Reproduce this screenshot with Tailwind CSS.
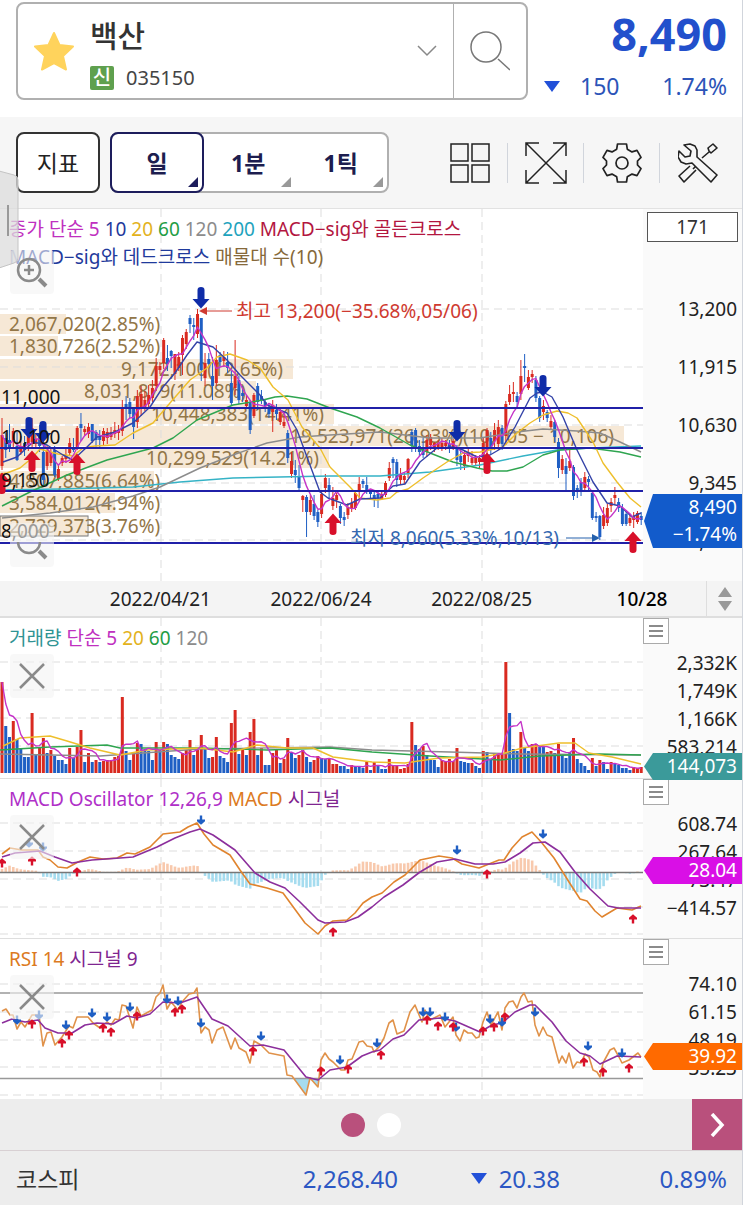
<!DOCTYPE html>
<html lang="ko">
<head>
  <meta charset="UTF-8" />
  <meta name="viewport" content="width=device-width, initial-scale=1.0" />
  <title>백산 035150</title>
  <script src="https://cdn.jsdelivr.net/npm/@tailwindcss/browser@4"></script>
</head>
<body class="relative border-r border-gray-300 bg-white font-['Noto_Sans','Noto_Sans_CJK_KR',sans-serif] text-[19px] leading-7 text-[#222]">

  <!-- shared chart symbols -->
  <svg class="absolute h-0 w-0" aria-hidden="true">
    <defs>
      <symbol id="arrow" viewBox="-9 -11 18 22" overflow="visible">
        <path d="M-3.5 -8a3.5 3 0 0 1 7 0V1H8.500L0 10.500L-8.500 1H-3.500Z" />
      </symbol>
      <symbol id="mini" viewBox="-5 -5 10 10" overflow="visible">
        <path d="M-1.200 -4.500H1.200V-.5H4V1.200L0 4.800L-4 1.200V-.5H-1.200Z" />
      </symbol>
    </defs>
  </svg>

  <header class="flex h-[117px] items-start pt-[2px] pl-4 pr-[15px]">
    <div class="flex h-[98px] w-[512px] items-stretch rounded-lg border-2 border-[#b0b0b0]">
      <button type="button" aria-label="관심종목" class="flex w-[72px] items-center justify-center">
        <svg class="h-10 w-10" viewBox="0 0 40 40"><path fill="#ffd35c" stroke="#ffd35c" stroke-width="2" stroke-linejoin="round" d="M20 2l5.500 12 13.500 1.500-10 9.500 3 13.500L20 32 8 38.500l3-13.500L1 15.500 14.500 14z" /></svg>
      </button>
      <button type="button" class="flex flex-1 items-center text-left">
        <span class="flex flex-1 flex-col pt-3">
          <span class="text-[30px] leading-[42px] font-medium text-[#333]">백산</span>
          <span class="flex items-center gap-3">
            <span class="flex h-6 w-6 items-center justify-center rounded-xs bg-[#5fa04e] text-[20px] font-medium text-white">신</span>
            <span class="text-[20px] leading-[42px] text-[#444]">035150</span>
          </span>
        </span>
        <svg class="mr-4 h-3 w-5" viewBox="0 0 20 12" fill="none" stroke="#888" stroke-width="1.500"><path d="M1 1l9 9 9-9" /></svg>
      </button>
      <button type="button" aria-label="검색" class="flex w-[73px] items-center justify-center border-l border-[#b0b0b0]">
        <svg class="h-10 w-10" viewBox="0 0 40 40" fill="none" stroke="#777" stroke-width="1.500"><circle cx="16" cy="16" r="15" /><path d="M28 28l12 11" /></svg>
      </button>
    </div>
    <div class="ml-4 flex-1 text-right text-[#2c54b8]">
      <div class="text-[45px] leading-[64px] font-bold text-[#2250cc]">8,490</div>
      <div class="flex items-center text-[23px] leading-10">
        <svg class="h-[11px] w-4" viewBox="0 0 16 11"><path fill="#2250d8" d="M0 0h16L8 11z" /></svg>
        <span class="ml-5">150</span>
        <span class="ml-auto">1.74%</span>
      </div>
    </div>
  </header>

  <nav class="flex h-[92px] items-center border-b border-[#e2e2e2] bg-[#f6f6f6] pr-[6px] pl-4">
    <button type="button" class="h-[61px] w-[84px] rounded-lg border-2 border-[#333] bg-white text-[23px]">지표</button>
    <div class="ml-[10px] flex h-[61px] w-[279px] items-stretch rounded-lg border-2 border-[#b0b0b0] bg-white text-[23px] font-bold text-[#1d1d4f]">
      <button type="button" aria-pressed="true" class="relative -m-[2px] w-[94px] rounded-lg border-2 border-[#1d1d5c]">일
        <svg class="absolute right-1 bottom-1 h-[10px] w-[10px]" viewBox="0 0 10 10"><path fill="#1d1d5c" d="M10 0v10H0z" /></svg>
      </button>
      <button type="button" aria-pressed="false" class="relative flex-1">1분
        <svg class="absolute right-1 bottom-1 h-[10px] w-[10px]" viewBox="0 0 10 10"><path fill="#999" d="M10 0v10H0z" /></svg>
      </button>
      <button type="button" aria-pressed="false" class="relative flex-1">1틱
        <svg class="absolute right-1 bottom-1 h-[10px] w-[10px]" viewBox="0 0 10 10"><path fill="#999" d="M10 0v10H0z" /></svg>
      </button>
    </div>
    <div class="ml-auto flex h-10 items-center divide-x divide-gray-300 text-[#222]">
      <button type="button" aria-label="화면분할" class="flex h-10 w-[75px] items-center justify-center">
        <svg class="h-10 w-10" viewBox="0 0 40 40" fill="none" stroke="currentColor" stroke-width="1.500"><path d="M1 1h17v17H1zM22 1h17v17H22zM1 22h17v17H1zM22 22h17v17H22z" /></svg>
      </button>
      <button type="button" aria-label="전체화면" class="flex h-10 w-[76px] items-center justify-center">
        <svg class="h-[42px] w-[42px]" viewBox="0 0 42 42" fill="none" stroke="currentColor" stroke-width="1.500"><path d="M1 14V1h13M28 1h13v13M41 28v13H28M14 41H1V28M1 1l40 40M41 1L1 41" /></svg>
      </button>
      <button type="button" aria-label="설정" class="flex h-10 w-[76px] items-center justify-center">
        <svg class="h-10 w-10" viewBox="0 0 40 40" fill="none" stroke="currentColor" stroke-width="1.700" stroke-linejoin="round"><path d="M15.500 1h9l.8 5.200 4.700 2.700 5-1.500 4 7-3.500 3.600v4l3.500 3.600-4 7-5-1.500-4.700 2.700-.8 5.200h-9l-.8-5.200-4.700-2.700-5 1.500-4-7 3.500-3.600v-4L1 14.400l4-7 5 1.500 4.700-2.700z" /><circle cx="20" cy="20" r="6" /></svg>
      </button>
      <button type="button" aria-label="도구" class="flex h-10 w-[76px] items-center justify-center">
        <svg class="h-10 w-10" viewBox="0 0 40 40" fill="none" stroke="currentColor" stroke-width="1.600" stroke-linejoin="round"><path d="M6 2l6-1 5 2 2 4v7l20 18-6 7-19-19-6 1-5-2-3-5 1-6 6 6 5-1 1-5zM31 8l2 2 6-5-4-4-5 4zM31 9l-7 6M12 23L1 33l5 6 12-12M15 26l2-2" /></svg>
      </button>
    </div>
  </nav>

  <!-- side drawer handle -->
  <svg class="absolute top-[170px] left-0 z-10 h-[100px] w-[19px]" viewBox="0 0 19 100"><path fill="#dcdcdc" fill-opacity=".75" stroke="#c4c4c4" d="M-1 1l15 4q4 1 4 5v78q0 4-4 5l-15 5z" /><path stroke="#999" stroke-width="2" d="M8 35v31" /></svg>

  <main>
    <!-- price -->
    <section class="flex">
      <div class="relative flex-1">
        <svg id="price" class="block h-auto w-full" viewBox="0 209 643 372"></svg>
        <p class="absolute top-[6px] left-[9px] text-[19px] leading-7 text-[#1f3a9c]">
          <span class="text-[#c030c0]">종가 단순 5</span> <span>10</span>
          <span class="text-[#e3b21c]">20</span> <span class="text-[#1f9d45]">60</span>
          <span class="text-[#8c8c8c]">120</span> <span class="text-[#1fa3bd]">200</span>
          <span class="text-[#b3163f]">MACD−sig와 골든크로스</span><br />
          <span>MACD−sig와 데드크로스</span> <span class="text-[#86693a]">매물대 수(10)</span>
        </p>
        <button type="button" aria-label="확대" class="absolute top-[41px] left-[10px] h-11 w-11 rounded bg-[#f4f4f4]/60">
          <svg class="h-11 w-11" viewBox="0 0 44 44" fill="none" stroke="#8a8a8a" stroke-width="2.500"><circle cx="19" cy="20" r="11" /><path d="M19 15v10M14 20h10" /><path stroke-width="4" d="M29 29l7 7" /></svg>
        </button>
        <button type="button" aria-label="축소" class="absolute top-[314px] left-[10px] h-11 w-11 rounded bg-[#f4f4f4]/60">
          <svg class="h-11 w-11" viewBox="0 0 44 44" fill="none" stroke="#8a8a8a" stroke-width="2.500"><path d="M8 19a11 11 0 1 0 22 0" /><path stroke-width="4" d="M29 28l7 7" /></svg>
        </button>
      </div>
      <div class="relative w-[99px] bg-[#fafafa] pt-[3px] text-right">
        <input type="text" value="171" aria-label="봉 개수" class="mx-1 block h-[30px] w-[91px] border border-[#555] bg-white text-center text-[#333]" />
        <div class="mt-[38px] pr-[5px] leading-[58px]">
          <div>13,200</div><div>11,915</div><div>10,630</div><div>9,345</div><div>8,060</div>
        </div>
        <div class="absolute top-[285px] right-0 left-px h-[54px] bg-[#125bcb] pr-[5px] leading-[27px] text-white [clip-path:polygon(9px_0,100%_0,100%_100%,9px_100%,0_50%)]">8,490<br />−1.74%</div>
      </div>
    </section>

    <div class="flex h-[37px] items-center border-b-2 border-[#dedede] bg-[#f4f4f4] pl-20 text-center">
      <span class="flex-1">2022/04/21</span>
      <span class="flex-1">2022/06/24</span>
      <span class="flex-1">2022/08/25</span>
      <span class="w-36 pl-4 font-medium text-black">10/28</span>
      <button type="button" aria-label="차트 높이" class="flex h-full w-9 items-center justify-center border-l border-[#dedede]">
        <svg class="h-6 w-4" viewBox="0 0 16 24" fill="#999"><path d="M8 0l7 10H1zM8 24l7-10H1z" /></svg>
      </button>
    </div>

    <!-- volume -->
    <section class="flex border-b border-[#dedede]">
      <div class="relative flex-1">
        <svg id="volume" class="block h-auto w-full" viewBox="0 618 643 160"></svg>
        <p class="absolute top-[6px] left-[9px] text-[#c030c0]">
          <span class="text-[#2f9393]">거래량</span> <span>단순 5</span> <span class="text-[#e3b21c]">20</span>
          <span class="text-[#1f9d45]">60</span> <span class="text-[#8c8c8c]">120</span>
        </p>
        <button type="button" aria-label="거래량 닫기" class="absolute top-9 left-[10px] h-11 w-11 rounded bg-[#f4f4f4]/60">
          <svg class="h-11 w-11" viewBox="0 0 44 44" stroke="#8a8a8a" stroke-width="2.500"><path d="M10 10l24 24M34 10L10 34" /></svg>
        </button>
      </div>
      <div class="relative w-[99px] bg-[#fafafa] text-right">
        <button type="button" aria-label="거래량 메뉴" class="absolute top-0 left-0 flex h-[26px] w-[26px] items-center justify-center border border-[#aaa] bg-white">
          <svg class="h-[14px] w-[14px]" viewBox="0 0 14 14" stroke="#666" stroke-width="1.500"><path d="M0 2h14M0 7h14M0 12h14" /></svg>
        </button>
        <div class="mt-[31px] pr-[5px]">
          <div>2,332K</div><div>1,749K</div><div>1,166K</div><div>583,214</div>
        </div>
        <div class="absolute top-[135px] right-0 left-px z-10 h-[27px] bg-[#3b9a9a] pr-[5px] leading-[27px] text-white [clip-path:polygon(9px_0,100%_0,100%_100%,9px_100%,0_50%)]">144,073</div>
      </div>
    </section>

    <!-- MACD oscillator -->
    <section class="flex border-b border-[#dedede]">
      <div class="relative flex-1">
        <svg id="macd" class="block h-auto w-full" viewBox="0 779 643 159"></svg>
        <p class="absolute top-[6px] left-[9px] text-[#b030c8]">MACD Oscillator 12,26,9 <span class="text-[#dc7a22]">MACD</span> <span class="text-[#7f2590]">시그널</span></p>
        <button type="button" aria-label="MACD 닫기" class="absolute top-9 left-[10px] h-11 w-11 rounded bg-[#f4f4f4]/60">
          <svg class="h-11 w-11" viewBox="0 0 44 44" stroke="#8a8a8a" stroke-width="2.500"><path d="M10 10l24 24M34 10L10 34" /></svg>
        </button>
      </div>
      <div class="relative w-[99px] bg-[#fafafa] text-right">
        <button type="button" aria-label="MACD 메뉴" class="absolute top-0 left-0 flex h-[26px] w-[26px] items-center justify-center border border-[#aaa] bg-white">
          <svg class="h-[14px] w-[14px]" viewBox="0 0 14 14" stroke="#666" stroke-width="1.500"><path d="M0 2h14M0 7h14M0 12h14" /></svg>
        </button>
        <div class="mt-[31px] pr-[5px]">
          <div>608.74</div><div>267.64</div><div>−73.47</div><div>−414.57</div>
        </div>
        <div class="absolute top-[78px] right-0 left-px h-[27px] bg-[#d90fe6] pr-[5px] leading-[27px] text-white [clip-path:polygon(9px_0,100%_0,100%_100%,9px_100%,0_50%)]">28.04</div>
      </div>
    </section>

    <!-- RSI -->
    <section class="flex">
      <div class="relative flex-1">
        <svg id="rsi" class="block h-auto w-full" viewBox="0 939 643 160"></svg>
        <p class="absolute top-[6px] left-[9px] text-[#dc7a22]">RSI 14 <span class="text-[#7f2590]">시그널 9</span></p>
        <button type="button" aria-label="RSI 닫기" class="absolute top-9 left-[10px] h-11 w-11 rounded bg-[#f4f4f4]/60">
          <svg class="h-11 w-11" viewBox="0 0 44 44" stroke="#8a8a8a" stroke-width="2.500"><path d="M10 10l24 24M34 10L10 34" /></svg>
        </button>
      </div>
      <div class="relative w-[99px] bg-[#fafafa] text-right">
        <button type="button" aria-label="RSI 메뉴" class="absolute top-0 left-0 flex h-[26px] w-[26px] items-center justify-center border border-[#aaa] bg-white">
          <svg class="h-[14px] w-[14px]" viewBox="0 0 14 14" stroke="#666" stroke-width="1.500"><path d="M0 2h14M0 7h14M0 12h14" /></svg>
        </button>
        <div class="mt-[31px] pr-[5px]">
          <div>74.10</div><div>61.15</div><div>48.19</div><div>35.23</div>
        </div>
        <div class="absolute top-[104px] right-0 left-px h-[27px] bg-[#ff6a00] pr-[5px] leading-[27px] text-white [clip-path:polygon(9px_0,100%_0,100%_100%,9px_100%,0_50%)]">39.92</div>
      </div>
    </section>
  </main>

  <div class="grid h-[52px] grid-cols-[50px_1fr_50px] items-center border-b border-[#d8d0d3] bg-[#ededed]">
    <div class="col-start-2 flex justify-center gap-3">
      <button type="button" aria-label="1 페이지" class="h-6 w-6 rounded-full bg-[#b9507c]"></button>
      <button type="button" aria-label="2 페이지" class="h-6 w-6 rounded-full bg-white"></button>
    </div>
    <button type="button" aria-label="다음" class="flex h-full items-center justify-center bg-[#b9507c]">
      <svg class="h-6 w-4" viewBox="0 0 16 24" fill="none" stroke="#fff" stroke-width="3.500"><path d="M3 1l10 11L3 23" /></svg>
    </button>
  </div>

  <footer class="flex h-[55px] items-center bg-[#ededed] pr-[15px] pl-4 text-[24px] text-[#2c58c4]">
    <div class="flex flex-1 justify-between"><span class="text-[23px] text-[#333]">코스피</span><span>2,268.40</span></div>
    <div class="flex w-[162px] items-center justify-end gap-3">
      <svg class="h-[11px] w-4" viewBox="0 0 16 11"><path fill="#2250d8" d="M0 0h16L8 11z" /></svg>
      <span>20.38</span>
    </div>
    <div class="w-[167px] text-right">0.89%</div>
  </footer>

  <script>
    const RED = '#d92a20', BLUE = '#1f5fc4';
    const px = i => 2 + 3.76 * i;

    // one candle: colour high top bottom low
    const candles = `r418,435,466,470 b433,438,450,458 b424,440,447,452 r428,431,442,448 b432,446,460,461 r436,446,452,455 b436,443,450,456 r425,432,444,451 r418,428,442,447 r434,439,444,447
b425,436,446,452 b432,452,480,485 r446,450,466,470 r448,452,463,466 b446,450,475,477 r464,469,479,481 r456,458,463,466 r449,456,459,463 r438,443,453,456 b438,448,450,452
r426,428,447,450 b413,424,428,441 r426,429,432,436 r423,427,434,438 b424,424,441,443 b430,432,440,447 b430,436,440,447 r428,431,441,445 r428,432,438,444 r427,432,437,440
r422,430,434,438 r425,431,433,440 r400,408,431,436 b396,404,407,420 b398,402,414,418 b408,409,427,439 r390,396,422,428 r386,394,408,416 r391,400,407,411 r385,395,404,408
r380,388,398,402 r358,366,386,391 r362,366,370,374 r338,340,363,369 b345,358,364,371 b350,351,356,368 r354,354,374,380 r352,357,368,371 r335,338,355,375 r329,332,344,349
b315,318,324,333 b318,325,327,340 r309,314,334,338 b318,318,370,381 r353,363,378,386 b353,359,364,366 b357,376,386,400 r345,360,383,386 b352,355,362,366 r351,357,361,367
b352,362,368,373 b371,383,403,405 r340,376,388,395 b376,380,400,404 b386,393,396,402 r396,400,406,408 b400,402,430,434 r393,395,416,418 b383,386,402,410 b390,396,400,404
b400,402,406,412 b404,408,414,418 r400,405,412,432 b404,410,414,420 r408,412,422,425 r415,422,426,428 b430,433,458,463 r452,461,474,478 b460,470,475,483 b465,477,488,490
r495,496,500,512 b495,497,512,537 r495,500,512,515 b495,504,516,520 b510,512,522,527 r490,494,514,518 r474,478,488,493 b478,485,491,498 r487,498,506,510 r493,495,500,508
b504,506,518,524 b512,517,520,526 r503,507,515,519 r498,503,508,512 r490,493,508,510 r477,484,491,500 b479,481,484,488 b477,485,490,494 b489,491,494,500 b491,495,500,507
b490,494,498,508 r490,494,499,500 r481,483,495,497 r462,468,478,481 b457,459,463,478 b459,462,480,487 r468,475,480,484 r472,476,480,484 r458,459,473,478 b430,432,446,452
b428,430,448,452 b440,446,452,456 b438,447,455,458 r435,440,452,457 r434,437,445,450 r442,443,448,452 r440,443,447,450 r438,443,449,451 r440,443,446,450 b440,444,449,453
r439,441,447,450 b445,449,460,466 b448,456,462,470 r450,455,466,470 r448,453,456,462 r451,458,463,465 r455,458,463,466 r455,458,462,468 r438,443,458,462 r428,430,450,455
b432,438,448,454 r423,430,441,450 r420,427,444,450 b425,428,444,450 r401,404,436,445 r385,394,402,405 r382,392,394,402 b392,396,402,408 r360,376,394,400 b354,366,368,382
r370,377,388,390 r370,374,377,383 b376,380,398,402 b396,398,418,422 r400,406,412,420 b410,412,418,422 r415,421,427,430 b420,422,437,442 b438,442,468,478 r455,459,470,474
b458,466,474,490 r447,461,468,471 b465,467,496,500 b485,488,490,498 b478,482,492,496 r472,477,488,491 b476,479,482,490 b490,493,518,520 b512,516,518,522 b515,516,537,540
r507,515,526,529 r504,508,523,526 r498,502,506,512 r487,495,498,504 b498,502,508,512 b504,508,524,526 b510,514,524,526 r515,518,523,526 r512,516,520,528 r511,513,522,524 b512,516,520,525`
      .split(/\s+/).map(s => [s[0], ...s.slice(1).split(',').map(Number)]);

    const volumes = `r91 b47 b36 r52 b34 b24 b16 b16 r60 b19 r26 r35 b20 r23 b17 b13 b13 b9 r25 b15 r26 r43 b11 r20 b11 r13 b11 r12 r13 r13 r16 r17 r76 b22 b13 r19 r30 b29 b24 b22
b13 r31 b24 r31 b29 b18 b16 b14 r20 r23 r33 b18 r23 r38 b24 b15 r16 r36 b17 b15 b11 r50 r63 b19 r24 b18 r41 r54 b18 r25 b8 b8 r20 r24 b10 r14 r35 b21 b15 r18
r23 b16 b11 r13 r17 b15 b14 r14 r9 r9 b7 b7 b4 r8 b7 b7 b5 r11 b3 r11 b8 b4 b4 r14 r7 r8 r4 r5 r9 r51 b28 b24 r27 b18 b13 b13 b6 r13 r12 r14
r12 r25 b12 b11 b10 r10 b7 b5 r22 b21 b14 r19 r20 r20 r111 b60 b24 b22 r41 b25 b22 r29 r29 b26 b27 r21 r22 b20 r29 b17 b15 b21 r35 b14 b10 b7 b3 r15 b7 r13
b11 b4 r11 b9 b8 b5 b5 b3 r6 r5 r6`.split(/\s+/).map(s => [s[0], Number(s.slice(1))]);

    const line = (pts, color, w = 1.4) => `<polyline points="${pts}" fill="none" stroke="${color}" stroke-width="${w}" stroke-linejoin="round"/>`;
    const grid = (ys, top, bottom) =>
      ys.map(y => `<path d="M0 ${y}H643" stroke="#ddd" stroke-dasharray="8 5"/>`).join('') +
      [161, 321, 482].map(x => `<path d="M${x} ${top}V${bottom}" stroke="#ddd" stroke-dasharray="8 5"/>`).join('');
    const average = (list, n) => list.map((_, i) => {
      const part = list.slice(Math.max(0, i - n + 1), i + 1);
      return px(i).toFixed(1) + ',' + (part.reduce((a, b) => a + b, 0) / part.length).toFixed(1);
    }).join(' ');
    const marks = (id, w, h, list, up) => list.map(([x, y]) =>
      `<g transform="translate(${x} ${y})${up ? ' rotate(180)' : ''}" fill="${up ? '#d8102a' : id === 'arrow' ? '#0f2ca8' : BLUE}"><use href="#${id}" x="${-w / 2}" y="${-h / 2}" width="${w}" height="${h}"/></g>`).join('');

    // ---- price ----
    const profile = [
      [66, '2,067,020(2.85%)'], [58, '1,830,726(2.52%)'], [293, '9,172,100(12.65%)'], [256, '8,031,879(11.08%)'], [334, '10,448,383(14.41%)'],
      [624, '19,523,971(26.93%)(10,105 − 10,106)'], [329, '10,299,529(14.21%)'], [154, '4,807,885(6.64%)'], [115, '3,584,012(4.94%)'], [87, '2,729,373(3.76%)']
    ];
    const bandY = i => Math.round(314 + 22.4 * i);
    let svg = profile.map(([w], i) => `<rect x="0" y="${bandY(i)}" width="${w}" height="20" fill="#f6e8d6"/>`).join('');
    svg += `<rect x="0" y="516" width="88" height="20" fill="none" stroke="#777"/>`;
    svg += grid([309, 367, 425, 483, 540], 209, 581);
    svg += profile.map(([w, t], i) => w > 200
      ? `<text x="${w - 10}" y="${bandY(i) + 17}" text-anchor="end" class="fill-[#927648] text-[19px]">${t}</text>`
      : `<text x="9" y="${bandY(i) + 17}" class="fill-[#927648] text-[19px]">${t}</text>`).join('');
    svg += candles.map(([c, h, t, b, l], i) => {
      const color = c === 'r' ? RED : BLUE;
      return `<path d="M${px(i)} ${h}V${l}" stroke="${color}" stroke-width="1"/><rect x="${px(i) - 1.5}" y="${t}" width="3" height="${b - t}" fill="${color}"/>`;
    }).join('');
    svg += line('0,490 60,489 133,487 180,482 233,478 330,476 380,476 430,472 480,465 523,456 557,450 590,448 641,446', '#35b3c6');
    svg += line('2,518 50,513 93,507 133,496 160,487 200,468 233,455 267,443 300,437 330,435 380,432 430,438 480,438 517,432 543,429 577,431 600,433 620,442 641,452', '#8c8c8c');
    svg += line('2,506 30,492 67,475 107,460 153,448 173,438 197,420 233,405 263,400 275,397 287,396 307,399 330,408 357,417 380,428 410,445 430,453 453,462 477,468 492,471 507,471 523,467 543,455 560,450 590,448 620,452 641,457', '#2fa550');
    svg += line('0,474 7,473 20,468 32,458 40,449 58,454 73,456 83,448 95,446 115,445 133,433 153,423 170,403 190,380 207,368 217,357 230,354 247,360 260,368 273,387 288,400 302,427 320,448 330,467 350,487 360,498 377,500 390,498 397,492 408,489 423,478 447,462 463,453 480,452 503,447 517,433 530,423 543,415 557,411 568,413 577,418 593,442 603,463 617,482 630,498 641,507', '#eebf2c');
    svg += line('3,462 17,457 33,442 47,445 63,455 73,460 87,447 97,437 115,432 133,423 150,407 163,387 175,373 187,355 197,342 213,347 227,360 240,375 260,395 267,405 287,413 297,430 307,457 320,492 328,498 347,505 360,499 380,498 393,486 405,484 420,462 437,448 453,447 463,450 477,457 490,455 502,448 515,427 530,398 537,393 543,392 552,397 563,417 577,450 593,482 607,503 620,506 632,517 641,513', '#3443a8');
    svg += line(average(candles.map(([c, , t, b]) => c === 'r' ? t : b), 5), '#c534c8');
    svg += [408, 448, 491, 543].map(y => `<path d="M0 ${y}H643" stroke="#2020a8" stroke-width="2"/>`).join('');
    svg += marks('arrow', 18, 22, [[201, 298], [29, 428], [43, 432], [457, 431], [543, 386]], false);
    svg += marks('arrow', 18, 22, [[2, 483], [32, 461], [77, 464], [333, 524], [487, 463], [633, 542]], true);
    svg += [['11,000', 404], ['10,100', 444], ['9,150', 487], ['8,000', 538]].map(([t, y]) => `<text x="1" y="${y}" class="fill-[#111] text-[19px]">${t}</text>`).join('');
    svg += `<path d="M232 311H206" stroke="#cf3a30"/><path d="M199 311l8-4v8z" fill="#cf3a30"/><text x="236" y="318" class="fill-[#cf3a30] text-[19px]">최고 13,200(−35.68%,05/06)</text>`;
    svg += `<path d="M566 538H594" stroke="#2460ac"/><path d="M600 538l-8-4v8z" fill="#2460ac"/><text x="350" y="545" class="fill-[#3468b0] text-[19px]">최저 8,060(5.33%,10/13)</text>`;
    document.getElementById('price').innerHTML = svg;

    // ---- volume ----
    svg = grid([662, 690, 718, 746], 618, 778);
    svg += volumes.map(([c, h], i) => `<rect x="${px(i) - 1.5}" y="${773 - h}" width="3" height="${h}" fill="${c === 'r' ? RED : BLUE}"/>`).join('');
    svg += line('0,754 100,756 200,749 330,747 372,750 450,752 520,754 641,755', '#8c8c8c');
    svg += line('0,750 50,747 107,745 120,748 200,748 267,750 330,748 372,752 430,756 500,760 540,756 600,754 641,755', '#2fa550');
    svg += line('3,746 20,738 50,736 67,741 90,748 120,755 147,750 200,748 233,752 257,745 287,748 313,748 333,757 372,762 405,763 439,758 482,757 505,753 522,748 559,743 575,743 589,753 612,757 641,764', '#eebf2c');
    svg += line(average(volumes.map(v => 773 - v[1]), 5), '#c534c8');
    document.getElementById('volume').innerHTML = svg;

    // ---- MACD ----
    const macd = '2,854 10,848 22,850 38,850 43,857 50,860 58,867 67,868 78,862 90,857 103,859 117,858 127,853 135,854 150,847 157,840 163,834 180,832 188,827 197,823 204,834 213,845 230,855 240,870 250,884 267,888 283,893 294,908 305,923 318,934 325,926 333,921 347,920 355,913 363,903 372,897 382,893 394,882 405,875 412,868 420,860 439,856 452,858 462,864 479,868 499,860 504,860 512,848 522,837 532,832 542,843 554,858 569,882 580,899 587,901 595,911 602,917 617,908 632,910 641,906';
    const signal = '2,857 15,853 40,851 55,857 72,863 92,860 120,858 133,857 157,847 175,838 190,832 200,829 213,835 235,850 255,873 270,882 285,888 300,902 318,920 325,923 345,922 358,917 372,907 384,897 403,885 420,872 437,862 455,859 475,864 493,864 505,862 520,853 533,843 545,842 560,852 575,872 590,889 608,906 618,908 641,908';
    const parse = s => s.split(' ').map(p => p.split(',').map(Number));
    const at = (pts, x) => {
      const k = Math.max(1, pts.findIndex(p => p[0] >= x));
      const [a, b] = [pts[k - 1], pts[k]];
      return a[1] + (b[1] - a[1]) * (x - a[0]) / (b[0] - a[0]);
    };
    const m = parse(macd), s = parse(signal);
    svg = grid([823, 851, 879, 907, 934], 779, 938);
    for (let i = 0; i < 170; i++) {
      const d = at(s, px(i)) - at(m, px(i));
      svg += `<rect x="${px(i) - 1.3}" y="${d > 0 ? 872 - d : 872}" width="2.6" height="${Math.abs(d)}" fill="${d > 0 ? '#f8c9ad' : '#a5dcef'}"/>`;
    }
    svg += `<path d="M0 872.500H643" stroke="#777" stroke-width="1.500"/>` + line(macd, '#e0842e', 1.6) + line(signal, '#8c2f9c', 1.6);
    svg += marks('mini', 10, 10, [[201, 820], [29, 843], [43, 847], [457, 850], [543, 834]], false);
    svg += marks('mini', 10, 10, [[2, 863], [32, 861], [77, 872], [333, 932], [487, 874], [633, 919]], true);
    document.getElementById('macd').innerHTML = svg;

    // ---- RSI ----
    svg = grid([984, 1012, 1040, 1067, 1095], 939, 1099);
    svg += `<path d="M293 1078L306 1095L310 1078L318 1087L320 1078Z" fill="#a5dcef"/>`;
    svg += `<path d="M0 993H643M0 1078.500H643" stroke="#999" stroke-width="1.500"/>`;
    svg += line('2,1011 6,1009 10,1015 13,1015 17,1029 21,1022 25,1027 32,1015 39,1015 43,1046 47,1033 51,1032 55,1045 62,1037 69,1026 73,1028 77,1017 88,1017 93,1023 100,1028 107,1022 111,1025 115,1019 119,1020 122,1005 126,1006 133,1028 137,1007 141,1016 152,1010 156,997 160,993 163,985 167,1009 171,1002 178,1010 182,1002 189,994 194,993 197,988 201,1033 205,1027 209,1030 212,1043 217,1030 223,1027 231,1049 235,1038 239,1048 246,1052 250,1063 254,1041 261,1045 269,1053 284,1056 287,1075 292,1076 306,1095 310,1078 318,1087 321,1060 325,1053 329,1059 333,1062 341,1070 345,1070 348,1060 352,1059 359,1042 363,1041 367,1046 372,1047 374,1052 379,1047 384,1038 389,1023 393,1020 397,1034 404,1031 410,1012 415,1005 422,1022 425,1010 430,1020 440,1015 445,1027 453,1017 456,1035 460,1041 464,1030 468,1033 472,1033 476,1038 479,1037 483,1022 487,1012 491,1025 498,1012 502,1030 505,1008 509,1002 513,1001 517,1008 521,997 524,993 528,1002 532,1001 535,1025 539,1036 543,1027 547,1035 552,1037 559,1063 562,1056 566,1063 569,1053 573,1068 577,1062 581,1063 585,1054 589,1057 593,1070 597,1072 600,1077 603,1063 610,1050 614,1048 619,1057 622,1063 629,1060 638,1053 641,1057', '#e0924a', 1.6);
    svg += line('2,1023 12,1019 25,1022 38,1020 45,1028 58,1033 72,1033 85,1025 97,1023 113,1024 127,1016 137,1018 150,1014 163,1002 180,1003 197,997 212,1019 228,1026 250,1046 263,1045 284,1050 306,1077 318,1080 330,1070 347,1067 362,1056 372,1052 380,1050 393,1039 404,1035 419,1020 440,1018 455,1021 480,1032 492,1025 502,1023 515,1012 530,1005 535,1005 552,1022 566,1041 580,1053 590,1056 600,1064 617,1056 641,1057', '#8c2f9c', 1.6);
    svg += marks('mini', 10, 10, [[17, 1020], [39, 1015], [66, 1025], [92, 1013], [107, 1017], [130, 1007], [167, 999], [178, 1001], [201, 1023], [261, 1036], [340, 1060], [377, 1043], [423, 1012], [430, 1012], [445, 1017], [456, 1027], [490, 1019], [502, 1022], [535, 1012], [588, 1046], [622, 1053]], false);
    svg += marks('mini', 10, 10, [[32, 1024], [62, 1043], [69, 1035], [103, 1028], [111, 1032], [137, 1016], [175, 1012], [182, 1009], [253, 1051], [321, 1071], [348, 1069], [381, 1055], [427, 1020], [438, 1026], [453, 1027], [483, 1031], [494, 1027], [505, 1017], [584, 1062], [603, 1072], [629, 1068]], true);
    document.getElementById('rsi').innerHTML = svg;
  </script>
</body>
</html>
